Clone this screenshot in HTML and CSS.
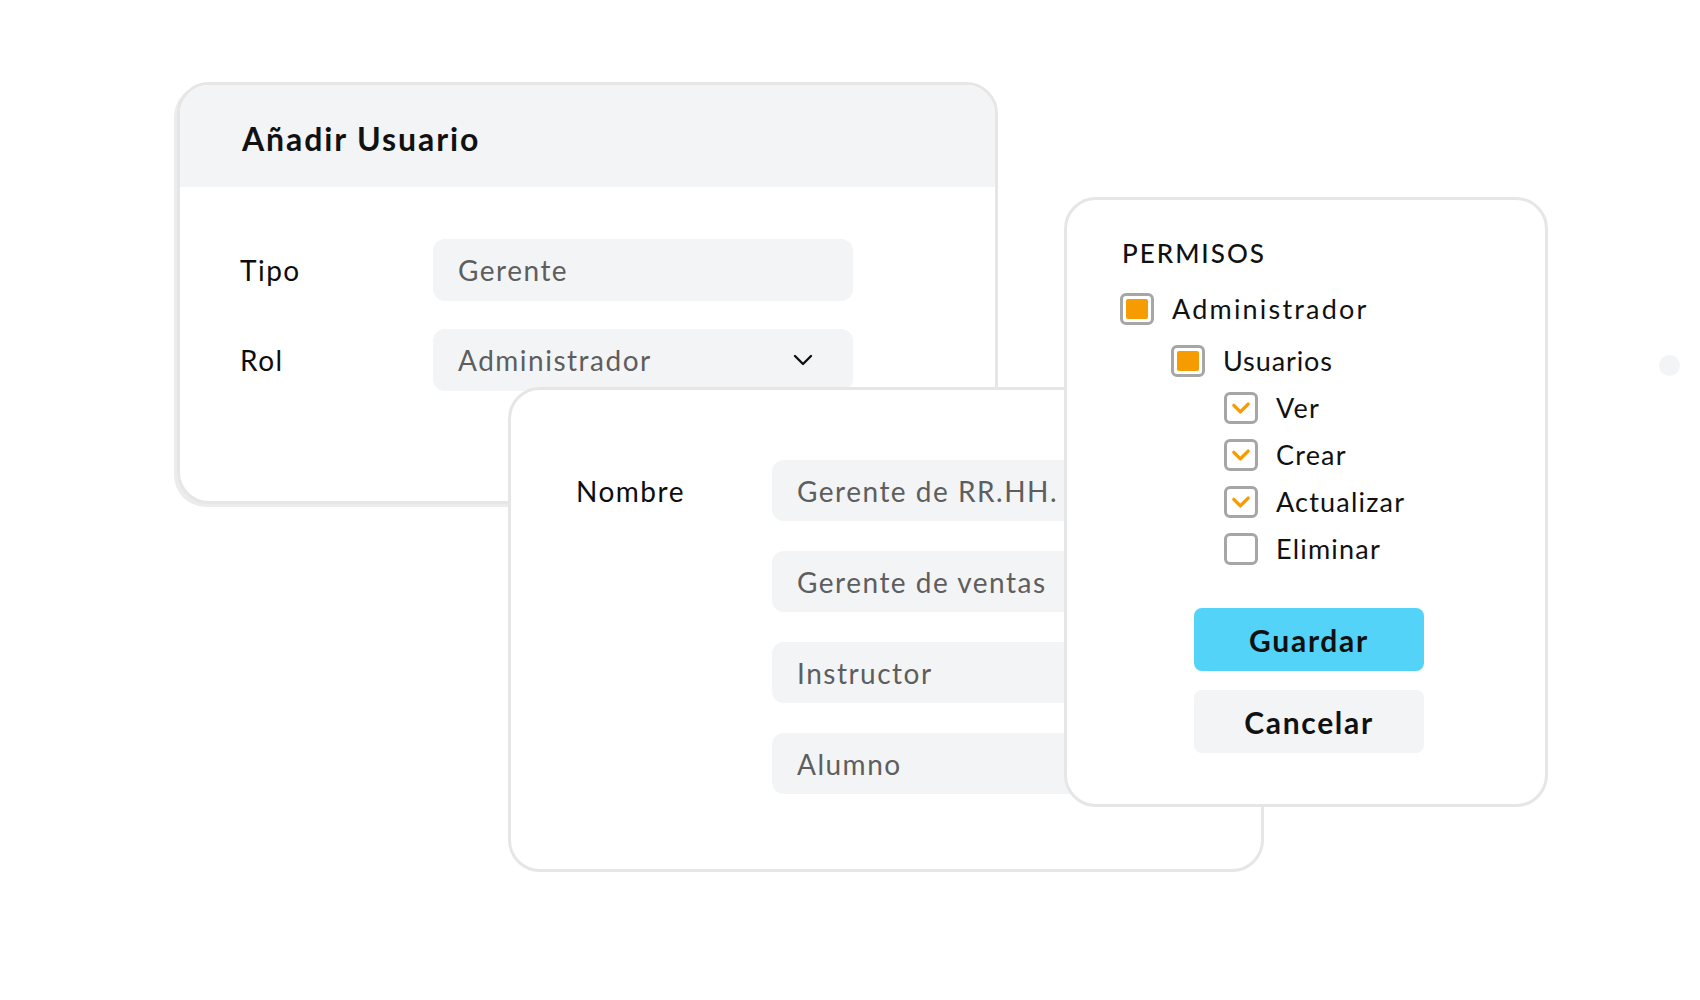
FILE: index.html
```html
<!DOCTYPE html>
<html lang="es">
<head>
    <meta charset="UTF-8">
    <meta name="viewport" content="width=device-width, initial-scale=1.0">
    <title>Añadir Usuario</title>
    <link rel="stylesheet" href="styles.css">
</head>
<body>

    <div class="stage">

        <!-- Card 1: basic user data -->
        <section class="card card-user">
            <header class="card-head">
                <h1>Añadir Usuario</h1>
            </header>
            <div class="card-body">
                <div class="field">
                    <span class="label">Tipo</span>
                    <div class="input">Gerente</div>
                </div>
                <div class="field">
                    <span class="label">Rol</span>
                    <div class="input select">
                        Administrador
                        <svg class="chevron" viewBox="0 0 20 12" width="20" height="12">
                            <path d="M2 2 L10 10 L18 2" fill="none" stroke="#111" stroke-width="2.4" stroke-linecap="round" stroke-linejoin="round"/>
                        </svg>
                    </div>
                </div>
            </div>
        </section>

        <!-- Card 2: role names -->
        <section class="card card-role">
            <div class="field field-top">
                <span class="label">Nombre</span>
                <div class="options">
                    <div class="input">Gerente de RR.HH.</div>
                    <div class="input">Gerente de ventas</div>
                    <div class="input">Instructor</div>
                    <div class="input">Alumno</div>
                </div>
            </div>
        </section>

        <!-- Card 3: permissions -->
        <section class="card card-perm">
            <h2>PERMISOS</h2>
            <ul class="tree">
                <li class="row"><span class="box partial"></span>Administrador</li>
                <li class="row lvl-1"><span class="box partial"></span>Usuarios</li>
                <li class="row lvl-2"><span class="box checked"><svg viewBox="0 0 20 20"><path d="M4.5 8 L9.5 13 L15.5 7" /></svg></span>Ver</li>
                <li class="row lvl-2"><span class="box checked"><svg viewBox="0 0 20 20"><path d="M4.5 8 L9.5 13 L15.5 7" /></svg></span>Crear</li>
                <li class="row lvl-2"><span class="box checked"><svg viewBox="0 0 20 20"><path d="M4.5 8 L9.5 13 L15.5 7" /></svg></span>Actualizar</li>
                <li class="row lvl-2"><span class="box"></span>Eliminar</li>
            </ul>
            <div class="actions">
                <button class="btn btn-save">Guardar</button>
                <button class="btn btn-cancel">Cancelar</button>
            </div>
        </section>

        <span class="dot"></span>
    </div>

</body>
</html>
```

FILE: styles.css
```css
* {
    box-sizing: border-box;
}

body {
    margin: 0;
    background: #fff;
    font-family: Lato, "Open Sans", sans-serif;
    color: #111;
}

.stage {
    position: relative;
    width: 1700px;
    height: 1000px;
    overflow: hidden;
}

/* cards sit on a free canvas, stacked over each other */
.card {
    position: absolute;
    background: #fff;
    border: 3px solid #e6e6e6;
    border-radius: 32px;
}

.label {
    font-size: 28px;
    letter-spacing: 1.5px;
    color: #0d0d0d;
}

.input {
    display: flex;
    align-items: center;
    height: 62px;
    padding-left: 25px;
    background: #f3f4f6;
    border-radius: 12px;
    font-size: 28px;
    letter-spacing: 1.5px;
    color: #5e5e5e;
}

.field {
    display: flex;
    align-items: center;
}

/* ---- card 1 ---- */
.card-user {
    left: 177px;
    top: 82px;
    width: 821px;
    height: 422px;
    overflow: hidden;
    z-index: 1;
    box-shadow: -3px 3px 0 #ececec;
}

.card-head {
    height: 102px;
    background: #f3f4f6;
    display: flex;
    align-items: center;
    padding-left: 62px;
}

.card-head h1 {
    margin: 0;
    font-size: 32px;
    font-weight: 700;
    letter-spacing: 1.9px;
    padding-top: 4px;
}

.card-body {
    padding: 52px 0 0 60px;
    display: flex;
    flex-direction: column;
    gap: 28px;
}

.card-user .label {
    width: 193px;
}

.card-user .input {
    width: 420px;
}

.select {
    justify-content: space-between;
    padding-right: 40px;
}

/* ---- card 2 ---- */
.card-role {
    left: 508px;
    top: 387px;
    width: 756px;
    height: 485px;
    z-index: 2;
    padding: 70px 0 0 65px;
}

.field-top {
    align-items: flex-start;
}

.field-top .label {
    width: 196px;
    line-height: 62px;
}

.options {
    display: flex;
    flex-direction: column;
    gap: 30px;
}

.options .input {
    width: 424px;
    height: 61px;
}

/* ---- card 3 ---- */
.card-perm {
    left: 1064px;
    top: 197px;
    width: 484px;
    height: 610px;
    z-index: 3;
    padding: 36px 0 0 53px;
}

.card-perm h2 {
    margin: 0 0 23px 2px;
    font-size: 26px;
    line-height: 34px;
    font-weight: 500;
    letter-spacing: 2px;
}

.tree {
    list-style: none;
    margin: 0;
    padding: 0;
}

.row {
    display: flex;
    align-items: center;
    height: 32px;
    margin-top: 15px;
    font-size: 27px;
    line-height: 30px;
    letter-spacing: 1.2px;
}

.row:first-child {
    margin-top: 0;
    letter-spacing: 2.2px;
}

.lvl-1 {
    margin-top: 20px;
    padding-left: 51px;
    letter-spacing: 0.9px;
}

.lvl-2 {
    padding-left: 104px;
}

.box {
    flex: none;
    width: 34px;
    height: 32px;
    margin-right: 18px;
    border: 3px solid #a6a6a6;
    border-radius: 6px;
    background: #fff;
    display: flex;
    align-items: center;
    justify-content: center;
}

.box.partial::after {
    content: "";
    width: 22px;
    height: 20px;
    border-radius: 2px;
    background: #f79c00;
}

.box svg {
    width: 26px;
    height: 26px;
    fill: none;
    stroke: #f79c00;
    stroke-width: 2.6;
    stroke-linecap: round;
    stroke-linejoin: round;
}

.actions {
    display: flex;
    flex-direction: column;
    gap: 19px;
    margin: 43px 0 0 74px;
}

.btn {
    width: 230px;
    height: 63px;
    border: none;
    border-radius: 8px;
    font-family: Lato, "Open Sans", sans-serif;
    font-size: 30px;
    font-weight: 700;
    letter-spacing: 1.7px;
    color: #111;
    cursor: pointer;
}

.btn-save {
    background: #53d3f7;
}

.btn-cancel {
    background: #f3f4f6;
}

.dot {
    position: absolute;
    left: 1659px;
    top: 355px;
    width: 21px;
    height: 21px;
    border-radius: 50%;
    background: #f3f4f6;
}
```
